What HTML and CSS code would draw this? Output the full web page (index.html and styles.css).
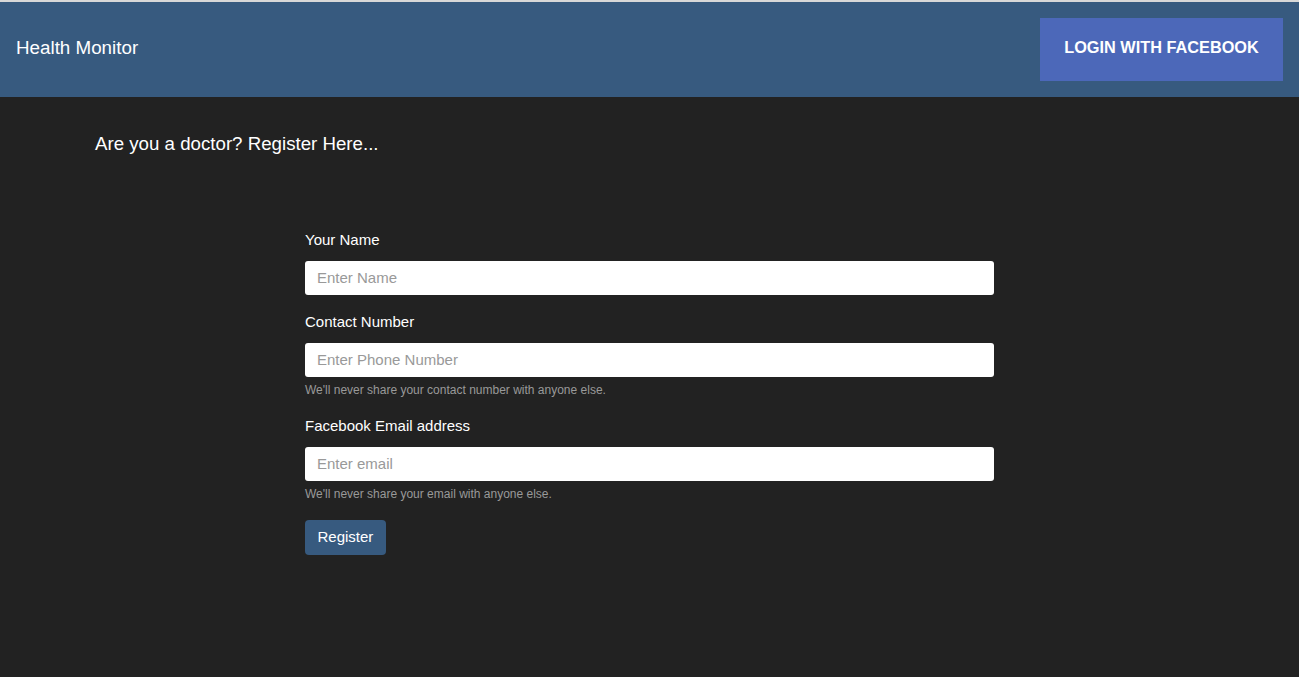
FILE: index.html
```html
<!DOCTYPE html>
<html>
<head>
<meta charset="utf-8">
<title>Health Monitor</title>
<link rel="stylesheet" href="styles.css">
</head>
<body>
<header class="navbar">
  <div class="brand">Health Monitor</div>
  <button class="fb-btn">LOGIN WITH FACEBOOK</button>
</header>
<main class="content">
  <h2 class="intro">Are you a doctor? Register Here...</h2>
  <form class="reg-form">
    <div class="group">
      <label class="label">Your Name</label>
      <input class="input" type="text" placeholder="Enter Name">
    </div>
    <div class="group">
      <label class="label">Contact Number</label>
      <input class="input" type="text" placeholder="Enter Phone Number">
      <small class="hint">We'll never share your contact number with anyone else.</small>
    </div>
    <div class="group">
      <label class="label">Facebook Email address</label>
      <input class="input" type="email" placeholder="Enter email">
      <small class="hint">We'll never share your email with anyone else.</small>
    </div>
    <button type="button" class="submit">Register</button>
  </form>
</main>
</body>
</html>
```
FILE: styles.css
```css
html, body {
  margin: 0;
  padding: 0;
  background: #222222;
  font-family: "Liberation Sans", Arial, sans-serif;
  color: #ffffff;
}

.navbar {
  border-top: 2px solid #d8d8d8;
  background: #375a7f;
  height: 95px;
  display: flex;
  align-items: center;
  justify-content: space-between;
  padding: 0 16px;
}

.brand {
  font-size: 18.8px;
  color: #ffffff;
  padding-bottom: 4px;
}

.fb-btn {
  box-sizing: border-box;
  background: #4c68b9;
  color: #ffffff;
  border: none;
  width: 243px;
  height: 63px;
  font-family: "Liberation Sans", Arial, sans-serif;
  font-weight: bold;
  font-size: 16.3px;
  padding: 0 0 4px;
}

.content {
  padding-top: 36px;
}

.intro {
  margin: 0 0 0 95px;
  font-weight: normal;
  font-size: 18.7px;
  line-height: 22px;
}

.reg-form {
  width: 689px;
  margin: 75px auto 0;
  display: flex;
  flex-direction: column;
}

.group {
  display: flex;
  flex-direction: column;
  margin-bottom: 17px;
}

.label {
  font-size: 15px;
  line-height: 20px;
  margin-bottom: 11px;
}

.input {
  box-sizing: border-box;
  width: 100%;
  height: 34px;
  border: none;
  border-radius: 3px;
  background: #ffffff;
  padding: 0 12px 2px;
  font-family: "Liberation Sans", Arial, sans-serif;
  font-size: 15px;
  color: #333;
}

.input::placeholder {
  color: #999999;
}

.hint {
  font-size: 12px;
  line-height: 15px;
  color: #999999;
  margin-top: 6px;
  margin-bottom: 1px;
}

.submit {
  align-self: flex-start;
  background: #375a7f;
  color: #ffffff;
  border: none;
  border-radius: 4px;
  height: 35px;
  padding: 0 12.5px 2px;
  font-family: "Liberation Sans", Arial, sans-serif;
  font-size: 15px;
  margin-top: 0;
}
```
